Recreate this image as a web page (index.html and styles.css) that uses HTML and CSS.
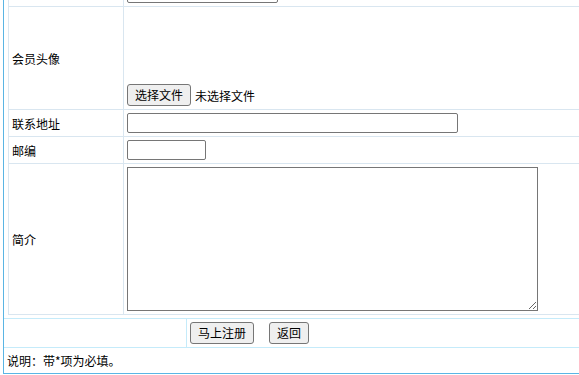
FILE: index.html
```html
<!DOCTYPE html>
<html lang="zh-CN">
<head>
<meta charset="utf-8">
<title>会员注册</title>
<link rel="stylesheet" href="styles.css">
</head>
<body>
<div class="outer">
  <div class="outer-main">
    <div class="form-table">
      <div class="row">
        <div class="label"></div>
        <div class="value"><input class="txt txt-mid" type="text"></div>
      </div>
      <div class="row">
        <div class="label">会员头像</div>
        <div class="value avatar">
          <div class="preview"></div>
          <div class="file">
            <button class="btn" type="button">选择文件</button>
            <span class="file-name">未选择文件</span>
          </div>
        </div>
      </div>
      <div class="row">
        <div class="label">联系地址</div>
        <div class="value"><input class="txt txt-long" type="text"></div>
      </div>
      <div class="row">
        <div class="label">邮编</div>
        <div class="value"><input class="txt txt-short" type="text"></div>
      </div>
      <div class="row">
        <div class="label">简介</div>
        <div class="value"><textarea class="intro"></textarea></div>
      </div>
    </div>
  </div>
  <div class="actions">
    <div class="actions-left"></div>
    <div class="actions-right">
      <button class="btn" type="button">马上注册</button>
      <button class="btn" type="button">返回</button>
    </div>
  </div>
  <div class="note">说明：带*项为必填。</div>
</div>
</body>
</html>
```
FILE: styles.css
```css
html, body {
  margin: 0;
  padding: 0;
  overflow: hidden;
  background: #fff;
}
body {
  font-family: "Noto Sans CJK SC", "Microsoft YaHei", sans-serif;
  font-size: 12px;
  color: #000;
}
.outer {
  margin: -24px 0 0 3px;
  border-left: 1px solid #5ab5e4;
  border-bottom: 1px solid #5ab5e4;
}
.outer-main {
  padding: 3px 0 3px 4px;
}
.form-table {
  border-left: 1px solid #d9e6f0;
  border-top: 1px solid #d9e6f0;
}
.row {
  display: grid;
  grid-template-columns: 115px 1fr;
  border-bottom: 1px solid #d9e6f0;
}
.label {
  border-right: 1px solid #d9e6f0;
  padding: 0 3px;
  display: flex;
  align-items: center;
}
.value {
  padding: 3px;
}
.avatar {
  display: flex;
  flex-direction: column;
}
.preview {
  height: 74px;
}
.file {
  display: flex;
  align-items: center;
  gap: 4px;
  height: 22px;
}
.txt {
  display: block;
  box-sizing: border-box;
  height: 20px;
  border: 1px solid #767676;
  border-radius: 2px;
  padding: 0 2px;
  margin: 0;
  font: inherit;
}
.txt-mid { width: 151px; }
.txt-long { width: 331px; }
.txt-short { width: 79px; }
.intro {
  display: block;
  box-sizing: border-box;
  width: 411px;
  height: 144px;
  margin: 0;
  border: 1px solid #767676;
  border-radius: 0;
  font: inherit;
}
.btn {
  box-sizing: border-box;
  height: 22px;
  padding: 0 7px;
  margin: 0;
  border: 1px solid #767676;
  border-radius: 3px;
  background: #efefef;
  font-family: inherit;
  font-size: 12px;
  color: #000;
  line-height: 20px;
}
.actions {
  display: grid;
  grid-template-columns: 183px 1fr;
  border-top: 1px solid #c5ebfa;
  border-bottom: 1px solid #c5ebfa;
}
.actions-left {
  border-right: 1px solid #c5ebfa;
}
.actions-right {
  padding: 3px;
  display: flex;
  gap: 15px;
}
.note {
  height: 25px;
  line-height: 25px;
  padding-left: 3px;
}
```
